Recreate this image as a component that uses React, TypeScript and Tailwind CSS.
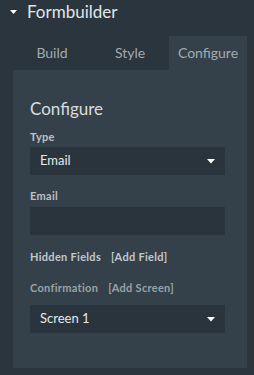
import React from "react";

const Caret = () => (
  <svg width="8" height="5" viewBox="0 0 8 5" className="block">
    <path d="M0 0 H8 L4 4.5 Z" fill="#ffffff" />
  </svg>
);

function Select({ value }: { value: string }) {
  return (
    <div className="flex h-[28px] items-center justify-between bg-[#2a343c] pl-[10px] pr-[10px]">
      <span className="text-[13px] text-[#e6e9eb]">{value}</span>
      <Caret />
    </div>
  );
}

export default function App() {
  return (
    <div
      className="h-[375px] w-[254px] overflow-hidden bg-[#2a353d]"
      style={{ fontFamily: "Lato, 'Noto Sans', sans-serif" }}
    >
      <div className="flex h-[36px] items-start pl-[10px] pt-[2px]">
        <svg width="7" height="5" viewBox="0 0 7 5" className="mr-[10px] mt-[8px] block">
          <path d="M0 0 H7 L3.5 4 Z" fill="#ffffff" />
        </svg>
        <span className="text-[17px] leading-[20px] text-[#e2e6e8]">Formbuilder</span>
      </div>
      <div className="ml-[13px] mr-[7px] grid h-[34px] grid-cols-3">
        <div className="flex items-center justify-center pb-[1px] text-[14px] text-[#a3abb1]">Build</div>
        <div className="flex items-center justify-center pb-[1px] text-[14px] text-[#a3abb1]">Style</div>
        <div className="flex items-center justify-center bg-[#34414a] pb-[1px] text-[14px] text-[#a3abb1]">Configure</div>
      </div>
      <div className="ml-[13px] mr-[7px] h-[298px] bg-[#34414a] pl-[17px] pr-[22px] pt-[30px]">
        <div className="text-[17px] leading-none text-[#d9dddf]">Configure</div>
        <div className="mt-[14px] text-[11px] font-bold leading-none tracking-[0.3px] text-[#bcc2c6]">Type</div>
        <div className="mt-[5px]">
          <Select value="Email" />
        </div>
        <div className="mt-[15px] text-[11px] font-bold leading-none tracking-[0.3px] text-[#bcc2c6]">Email</div>
        <div className="mt-[6px] h-[28px] bg-[#2a343c]" />
        <div className="mt-[16px] flex text-[11px] font-bold leading-none tracking-[0.3px] text-[#c3c8cc]">
          <span>Hidden Fields</span>
          <span className="ml-[10px]">[Add Field]</span>
        </div>
        <div className="mt-[20px] flex text-[11px] font-bold leading-none tracking-[0.3px] text-[#9aa2a8]">
          <span>Confirmation</span>
          <span className="ml-[10px]">[Add Screen]</span>
        </div>
        <div className="mt-[12px]">
          <Select value="Screen 1" />
        </div>
      </div>
    </div>
  );
}
